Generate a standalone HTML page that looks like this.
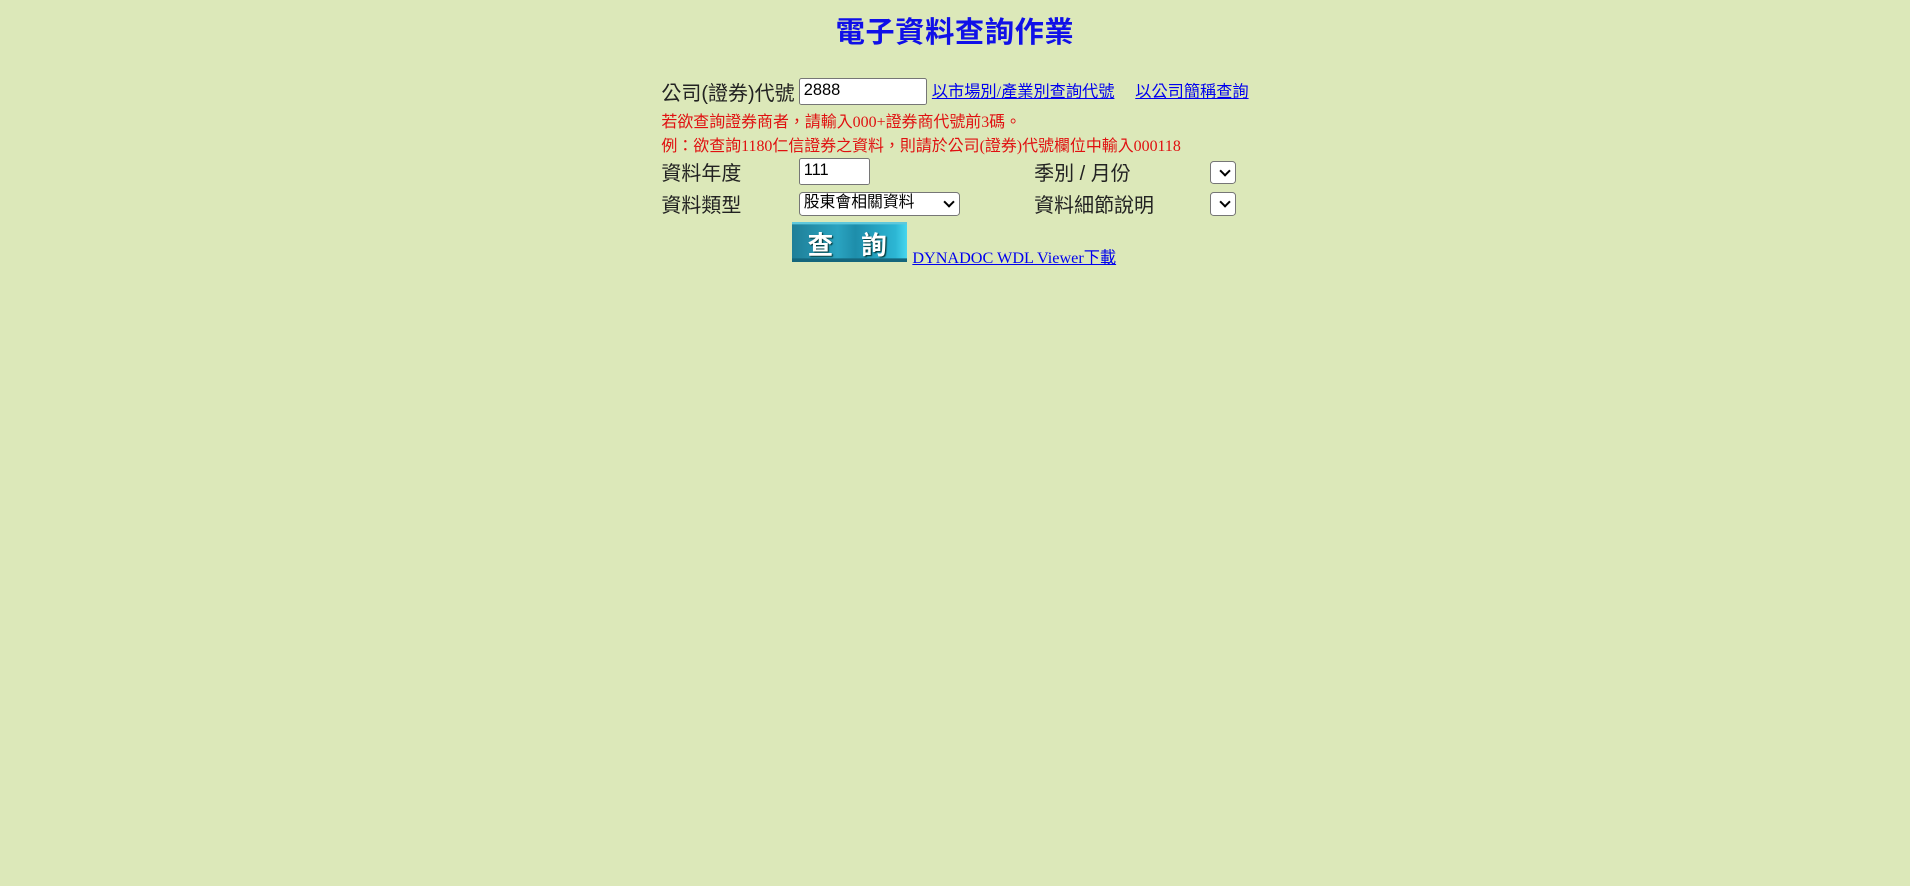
<!DOCTYPE html>
<html><head><meta charset="utf-8"><style>
html{zoom:1.2181}
body{margin:0;background:#dce8b9;width:1568px;height:727px;position:relative;overflow:hidden;font-family:"Liberation Sans","Noto Sans CJK TC",sans-serif}
.a{position:absolute;white-space:nowrap}
.lab{font-size:16.4px;color:#222}
.inp{position:absolute;background:#fff;border:1px solid #767676;border-radius:2px;box-sizing:border-box;font-size:13.5px;padding-left:3px;color:#000;line-height:19px}
.sel{position:absolute;background:#fff;border:1px solid #767676;border-radius:3px;box-sizing:border-box;font-size:13px;color:#000}
.chev{position:absolute;right:5px;top:4px;width:5px;height:5px;border-right:2px solid #000;border-bottom:2px solid #000;transform:rotate(45deg)}
a{color:#0000ee;text-decoration:underline;font-family:"Liberation Serif","Noto Sans CJK TC",serif;font-size:13.3px}
.red{color:#e01010;font-family:"Liberation Serif","Noto Sans CJK TC",serif;font-size:13.1px}
</style></head><body>
<div class="a" style="left:686px;top:7px;font-size:24px;font-weight:bold;color:#1010e8;letter-spacing:0.5px">電子資料查詢作業</div>

<div class="a lab" style="left:543px;top:63px">公司(證券)代號</div>
<div class="inp" style="left:656px;top:64px;width:105px;height:22px">2888</div>
<a class="a" style="left:765px;top:64px">以市場別/產業別查詢代號</a>
<a class="a" style="left:932px;top:64px">以公司簡稱查詢</a>

<div class="a red" style="left:543px;top:89px">若欲查詢證券商者，請輸入000+證券商代號前3碼。</div>
<div class="a red" style="left:543px;top:108px">例：欲查詢1180仁信證券之資料，則請於公司(證券)代號欄位中輸入000118</div>

<div class="a lab" style="left:543px;top:129px">資料年度</div>
<div class="inp" style="left:656px;top:130px;width:58px;height:22px">111</div>
<div class="a lab" style="left:849px;top:129px">季別 / 月份</div>
<div class="sel" style="left:993px;top:132px;width:22px;height:19px"><div class="chev"></div></div>

<div class="a lab" style="left:543px;top:155px">資料類型</div>
<div class="sel" style="left:656px;top:158px;width:132px;height:19px;padding-left:3px;line-height:16px">股東會相關資料<div class="chev"></div></div>
<div class="a lab" style="left:849px;top:155px">資料細節說明</div>
<div class="sel" style="left:993px;top:158px;width:22px;height:19px"><div class="chev"></div></div>

<div class="a" style="left:650px;top:182px;width:95px;height:33px;background:linear-gradient(90deg,#1f7f98 0%,#2aa3c0 40%,#1e8eab 55%,#2cb6d4 90%,#47d6ee 100%);box-shadow:inset 0 -3px 0 #14667c,inset 0 2px 0 #5fc8dc">
<span class="a" style="left:13px;top:3px;color:#fff;font-size:21px;font-weight:bold;text-shadow:1px 1px 1px #033">查</span>
<span class="a" style="left:57px;top:3px;color:#fff;font-size:21px;font-weight:bold;text-shadow:1px 1px 1px #033">詢</span>
</div>
<a class="a" style="left:749px;top:200px">DYNADOC WDL Viewer下載</a>
</body></html>
